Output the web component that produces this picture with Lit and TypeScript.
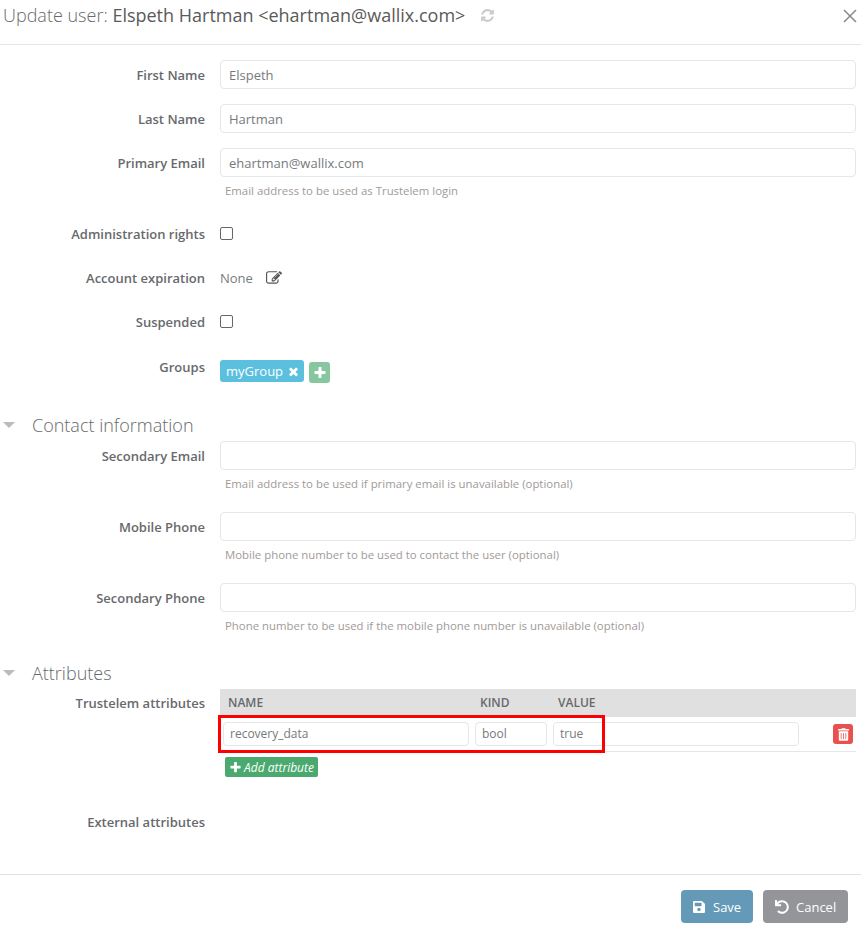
import { LitElement, html, css, svg } from "lit";
import { customElement } from "lit/decorators.js";

const icon = (vb: string, d: string, cls = "") =>
  html`<svg class="ic ${cls}" viewBox="${vb}" fill="currentColor"><path d="${d}"></path></svg>`;
const REFRESH = "M1639 1056q0 5-1 7-64 268-268 434.5t-478 166.5q-146 0-282.5-55t-243.5-157l-129 129q-19 19-45 19t-45-19-19-45v-448q0-26 19-45t45-19h448q26 0 45 19t19 45-19 45l-137 137q71 66 161 102t187 36q134 0 250-65t186-179q11-17 53-117 8-23 30-23h192q13 0 22.5 9.5t9.5 22.5zm25-800v448q0 26-19 45t-45 19h-448q-26 0-45-19t-19-45 19-45l138-138q-148-137-349-137-134 0-250 65t-186 179q-11 17-53 117-8 23-30 23h-199q-13 0-22.5-9.5t-9.5-22.5v-7q65-268 270-434.5t480-166.5q146 0 284 55.5t245 156.5l130-129q19-19 45-19t45 19 19 45z";
const PLUS = "M1600 736v192q0 40-28 68t-68 28h-416v416q0 40-28 68t-68 28h-192q-40 0-68-28t-28-68v-416h-416q-40 0-68-28t-28-68v-192q0-40 28-68t68-28h416v-416q0-40 28-68t68-28h192q40 0 68 28t28 68v416h416q40 0 68 28t28 68z";
const TIMES = "M1490 1322q0 40-28 68l-136 136q-28 28-68 28t-68-28l-294-294-294 294q-28 28-68 28t-68-28l-136-136q-28-28-28-68t28-68l294-294-294-294q-28-28-28-68t28-68l136-136q28-28 68-28t68 28l294 294 294-294q28-28 68-28t68 28l136 136q28 28 28 68t-28 68l-294 294 294 294q28 28 28 68z";
const SAVE = "M433.941 129.941l-83.882-83.882A48 48 0 0 0 316.118 32H48C21.49 32 0 53.49 0 80v352c0 26.51 21.49 48 48 48h352c26.51 0 48-21.49 48-48V163.882a48 48 0 0 0-14.059-33.941zM224 416c-35.346 0-64-28.654-64-64 0-35.346 28.654-64 64-64s64 28.654 64 64c0 35.346-28.654 64-64 64zm96-304.52V212c0 6.627-5.373 12-12 12H76c-6.627 0-12-5.373-12-12V108c0-6.627 5.373-12 12-12h228.52c3.183 0 6.235 1.264 8.485 3.515l3.48 3.48A11.996 11.996 0 0 1 320 111.48z";
const UNDO = "M212.333 224.333H12c-6.627 0-12-5.373-12-12V12C0 5.373 5.373 0 12 0h48c6.627 0 12 5.373 12 12v78.112C117.773 39.279 184.26 7.47 258.175 8.007c136.906.994 246.448 111.623 246.157 248.532C504.041 393.258 393.12 504 256.333 504c-64.089 0-122.496-24.313-166.51-64.215-5.099-4.622-5.334-12.554-.467-17.42l33.967-33.967c4.474-4.474 11.662-4.717 16.401-.525C170.76 415.336 211.58 432 256.333 432c97.268 0 176-78.716 176-176 0-97.267-78.716-176-176-176-58.496 0-110.28 28.476-142.274 72.333h98.274c6.627 0 12 5.373 12 12v48c0 6.627-5.373 12-12 12z";
const EDIT = "M888 1184l116-116-152-152-116 116v56h96v96h56zm440-720q-16-16-33 1l-350 350q-17 17-1 33t33-1l350-350q17-17 1-33zm80 594v190q0 119-84.5 203.5t-203.5 84.5h-832q-119 0-203.5-84.5t-84.5-203.5v-832q0-119 84.5-203.5t203.5-84.5h832q63 0 117 25 15 7 18 23 3 17-9 29l-49 49q-14 14-32 8-23-6-45-6h-832q-66 0-113 47t-47 113v832q0 66 47 113t113 47h832q66 0 113-47t47-113v-126q0-13 9-22l64-64q15-15 35-8t20 29zm-96-738l288 288-672 672h-288v-288zm444 132l-92 92-288-288 92-92q28-28 68-28t68 28l152 152q28 28 28 68t-28 68z";
const TRASH = "M32 464a48 48 0 0 0 48 48h288a48 48 0 0 0 48-48V128H32zm272-256a16 16 0 0 1 32 0v224a16 16 0 0 1-32 0zm-96 0a16 16 0 0 1 32 0v224a16 16 0 0 1-32 0zm-96 0a16 16 0 0 1 32 0v224a16 16 0 0 1-32 0zM432 32H312l-9.4-18.7A24 24 0 0 0 281.1 0H166.8a23.72 23.72 0 0 0-21.4 13.3L136 32H16A16 16 0 0 0 0 48v32a16 16 0 0 0 16 16h416a16 16 0 0 0 16-16V48a16 16 0 0 0-16-16z";

@customElement("app-root")
export class AppRoot extends LitElement {
  static styles = css`
    :host { display: block; width: 861px; height: 929px; overflow: hidden; background: #fff;
      font-family: "Open Sans", sans-serif; font-size: 13px; color: #676a6c; }
    * { box-sizing: border-box; }
    .ic { display: block; flex: none; }
    header { height: 45px; border-bottom: 1px solid #e5e5e5; padding: 0 4px 0 3px; display: flex; align-items: flex-start; }
    h1 { margin: 0; font-size: 18px; font-weight: 300; line-height: 30px; color: #676a6c; white-space: nowrap; }
    h1 b { font-weight: 400; color: #5a5a5a; }
    .refresh { width: 15px; height: 15px; margin: 8px 0 0 15px; color: #ccc; }
    .close { margin: 9px 0 0 auto; width: 14px; height: 14px; color: #888; }
    .body { padding-top: 15px; height: 829px; }
    .row { display: grid; grid-template-columns: 205px 636px; column-gap: 15px; align-items: start; }
    .lab { font-weight: 600; text-align: right; line-height: 30px; height: 30px; color: #676a6c; }
    .lab.up { margin-top: -1px; }
    input.txt { display: block; width: 100%; height: 29px; padding: 0 8px; border: 1px solid #e5e6e7; border-radius: 4px;
      font: 13px "Open Sans", sans-serif; color: #767a7c; background: #fff; outline: none; }
    .mb14 { margin-bottom: 14px; }
    .help { font-size: 11.4px; line-height: 15px; color: #a19a98; padding: 6px 0 0 5px; height: 22px; }
    .cell { height: 30px; display: flex; align-items: center; }
    .chk { width: 13px; height: 13px; border: 1.5px solid #666; border-radius: 2px; margin-top: -2px; }
    .none { color: #767b7e; }
    .edit { width: 16px; height: 16px; margin-left: 13px; color: #555; }
    .tag { height: 22px; width: 84px; margin-top: 8px; background: #5bc0de; border-radius: 3px; color: #fff; display: flex; align-items: center;
      padding-left: 6px; font-size: 13px; }
    .tag .ic { width: 13px; height: 13px; margin-left: 4px; }
    .addg { width: 21px; height: 21px; margin: 10px 0 0 5px; background: #87c7a0; border-radius: 3px; color: #fff; display: flex; align-items: center; justify-content: center; }
    .addg .ic { width: 14px; height: 14px; }
    .groups { height: 30px; align-items: flex-start; }
    .sec { height: 30px; display: flex; align-items: center; font-size: 18px; font-weight: 300; color: #676a6c; padding-left: 3px; margin-bottom: 1px; }
    .tri { width: 0; height: 0; border-left: 6px solid transparent; border-right: 6px solid transparent; border-top: 6px solid #bbb; margin-right: 17px; }
    .table { position: relative; }
    .thead { height: 28px; background: #e0e0e0; display: grid; grid-template-columns: 252px 78px auto; padding: 0 0 2px 8px; align-items: center;
      font-size: 12px; font-weight: 600; color: #676a6c; }
    .trow { height: 35px; border-bottom: 1px solid #e5e6e7; display: flex; align-items: flex-start; padding: 5px 0 0 3px; }
    .trow input.txt { height: 24px; font-size: 12px; padding: 0 6px 2px; border-radius: 4px; flex: none; margin-right: 6px; }
    .trow input.c1 { width: 246px; }
    .trow input.c2 { width: 72px; }
    .trow input.c3 { width: 246px; margin-right: 0; }
    .del { width: 20px; height: 20px; background: #e9504f; border-radius: 3px; color: #fff; margin: 2px 3px 0 auto; display: flex; align-items: center; justify-content: center; }
    .del .ic { width: 11px; height: 13px; }
    .redbox { position: absolute; left: -2px; top: 26px; width: 387px; height: 38px; border: 3px solid #f00; pointer-events: none; }
    .addattr { display: inline-flex; align-items: center; height: 20px; width: 93px; margin: 5px 0 0 5px; background: #4aa96e; border-radius: 2px; color: #fff;
      font-size: 12px; font-style: italic; padding-left: 4px; }
    .addattr .ic { width: 13px; height: 13px; margin-right: 2px; }
    footer { height: 55px; border-top: 1px solid #e0e0e6; display: flex; justify-content: flex-end; align-items: flex-start; gap: 10px; padding: 15px 13px 0 0; }
    .btn { height: 33px; border-radius: 4px; color: #fff; display: flex; align-items: center; font-size: 13px; }
    .save { width: 72px; background: #649ab8; padding-left: 12px; }
    .cancel { width: 85px; background: #939598; padding-left: 12px; }
    .save .ic { width: 12px; height: 14px; margin-right: 8px; }
    .cancel .ic { width: 14px; height: 14px; margin-right: 7px; }
  `;

  private field(label: string, value = "", help = "") {
    return html`<div class="row ${help ? "" : "mb14"}">
      <div class="lab">${label}</div>
      <div>
        <input class="txt" .value=${value} />
        ${help ? html`<div class="help">${help}</div>` : ""}
      </div>
    </div>`;
  }

  render() {
    return html`
      <header>
        <h1>Update user: <b>Elspeth Hartman &lt;ehartman@wallix.com&gt;</b></h1>
        ${icon("0 0 1792 1792", REFRESH, "refresh")}
        <svg class="ic close" viewBox="0 0 14 14" fill="none" stroke="currentColor" stroke-width="1.5">
          ${svg`<path d="M1 1L13 13M13 1L1 13"></path>`}
        </svg>
      </header>
      <div class="body">
        ${this.field("First Name", "Elspeth")}
        ${this.field("Last Name", "Hartman")}
        ${this.field("Primary Email", "ehartman@wallix.com", "Email address to be used as Trustelem login")}
        <div style="height:20px"></div>
        <div class="row mb14"><div class="lab">Administration rights</div><div class="cell"><span class="chk"></span></div></div>
        <div class="row mb14"><div class="lab">Account expiration</div><div class="cell"><span class="none">None</span>${icon("0 0 1792 1792", EDIT, "edit")}</div></div>
        <div class="row" style="margin-bottom:15px"><div class="lab">Suspended</div><div class="cell"><span class="chk"></span></div></div>
        <div class="row">
          <div class="lab">Groups</div>
          <div class="cell groups">
            <div class="tag">myGroup${icon("0 0 1792 1792", TIMES)}</div>
            <div class="addg">${icon("0 0 1792 1792", PLUS)}</div>
          </div>
        </div>
        <div class="sec" style="margin-top:28px"><span class="tri"></span>Contact information</div>
        ${this.field("Secondary Email", "", "Email address to be used if primary email is unavailable (optional)")}
        <div style="height:20px"></div>
        ${this.field("Mobile Phone", "", "Mobile phone number to be used to contact the user (optional)")}
        <div style="height:20px"></div>
        ${this.field("Secondary Phone", "", "Phone number to be used if the mobile phone number is unavailable (optional)")}
        <div class="sec" style="margin-top:24px"><span class="tri"></span>Attributes</div>
        <div class="row">
          <div class="lab up">Trustelem attributes</div>
          <div class="table">
            <div class="thead"><span>NAME</span><span>KIND</span><span>VALUE</span></div>
            <div class="trow">
              <input class="txt c1" .value=${"recovery_data"} />
              <input class="txt c2" .value=${"bool"} />
              <input class="txt c3" .value=${"true"} />
              <div class="del">${icon("0 0 448 512", TRASH)}</div>
            </div>
            <div class="addattr">${icon("0 0 1792 1792", PLUS)}Add attribute</div>
            <div class="redbox"></div>
          </div>
        </div>
        <div class="row" style="margin-top:29px"><div class="lab">External attributes</div><div></div></div>
      </div>
      <footer>
        <div class="btn save">${icon("0 0 448 512", SAVE)}Save</div>
        <div class="btn cancel">${icon("0 0 512 512", UNDO)}Cancel</div>
      </footer>
    `;
  }
}
